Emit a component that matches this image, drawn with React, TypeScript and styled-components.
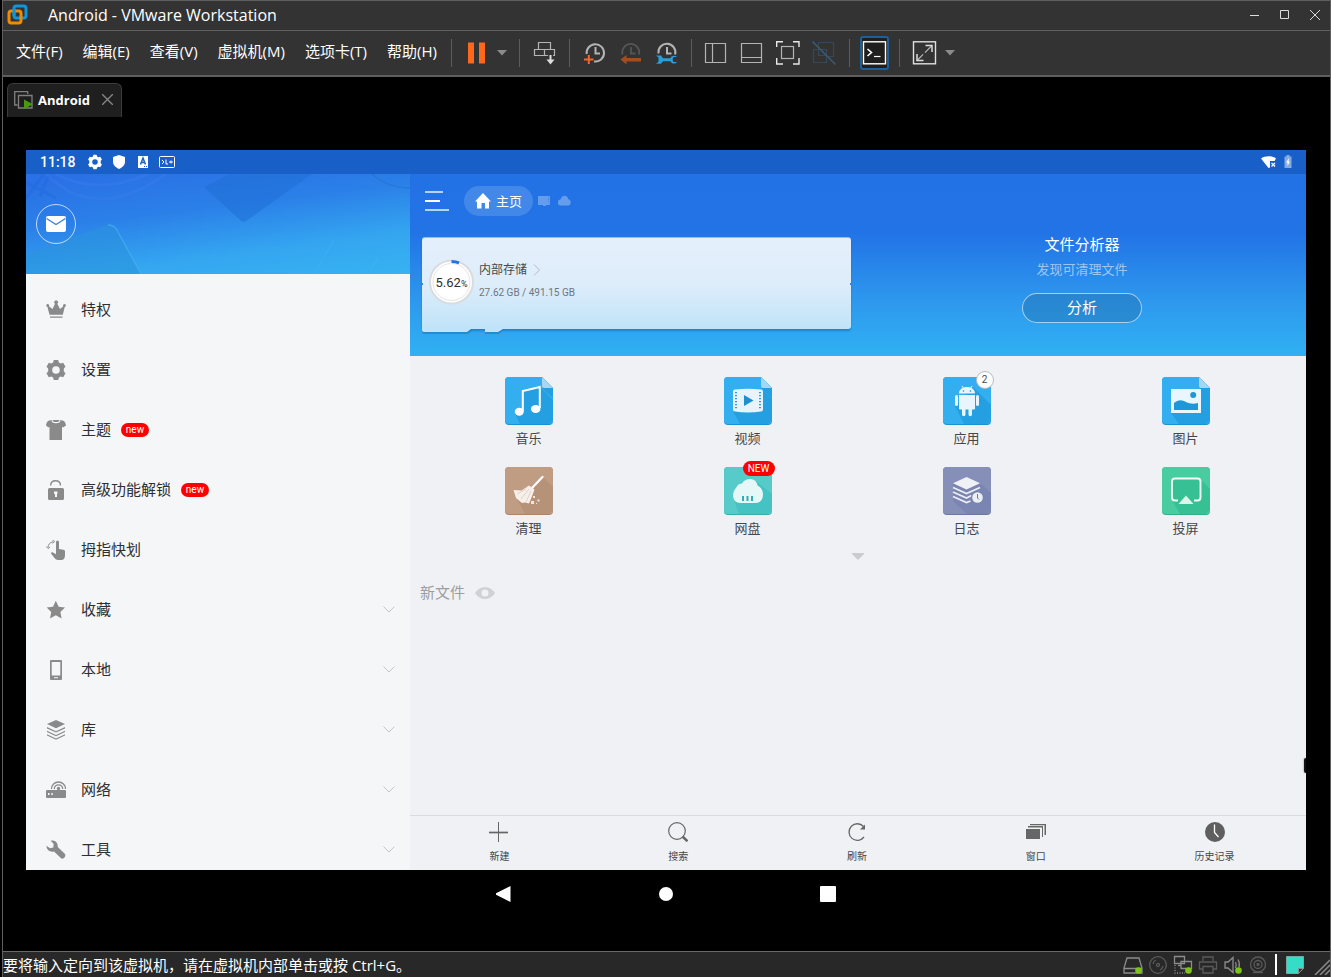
import React from 'react';
import styled, { createGlobalStyle } from 'styled-components';

const desktopFont = '"Open Sans", "Noto Sans CJK SC", sans-serif';
const deviceFont = 'Roboto, "Noto Sans CJK SC", sans-serif';

const GlobalStyle = createGlobalStyle`
  *, *::before, *::after { box-sizing: border-box; }
  body { margin: 0; background: #000; font-family: ${desktopFont}; }
  button { margin: 0; padding: 0; border: 0; background: none; color: inherit; font: inherit; cursor: pointer; }
  h1, h2, p { margin: 0; font-weight: 400; }
  svg { display: block; flex: none; }
`;

/* ---------- desktop window ---------- */

const Window = styled.div`
  display: flex;
  flex-direction: column;
  height: 100vh;
  min-height: 600px;
  border: solid #5f5f5f;
  border-width: 1px 1px 0 1px;
  margin-left: 2px;
  background: #000;
  color: #fff;
`;

const TitleBar = styled.header`
  display: flex;
  align-items: center;
  height: 30px;
  flex: none;
  padding: 0 5px 2px 4px;
  background: #333;
  border-bottom: 1px solid #5f5f5f;
`;

const WindowTitle = styled.h1`
  flex: 1;
  margin-left: 20px;
  font-size: 16px;
  line-height: 26px;
`;

const WindowButtons = styled.div`
  display: flex;
  gap: 10px;
`;

const WindowButton = styled.button`
  display: grid;
  place-items: center;
  width: 20px;
  height: 24px;
`;

const CommandBar = styled.div`
  display: flex;
  align-items: center;
  height: 46px;
  flex: none;
  padding-left: 13px;
  background: #333;
  border-bottom: 2px solid #5f5f5f;
`;

const MenuBar = styled.nav`
  display: flex;
  gap: 20px;
  margin-right: 2px;
`;

const MenuItem = styled.button`
  padding-bottom: 4px;
  font-size: 15px;
  line-height: 24px;
  white-space: nowrap;
`;

const Divider = styled.span`
  width: 1px;
  height: 28px;
  margin: 0 12px;
  background: #5c5c5c;
`;

const ToolGroup = styled.div<{ $gap?: number }>`
  display: flex;
  align-items: center;
  gap: ${(p) => p.$gap ?? 11}px;
`;

const ToolButton = styled.button`
  width: 25px;
  height: 24px;
`;

const CaretButton = styled.button`
  display: flex;
  justify-content: flex-end;
  width: 18px;
`;

const ConsoleButton = styled.button`
  display: grid;
  place-items: center;
  width: 29px;
  height: 34px;
  margin: 0 -2px;
  border: 2px solid #1b5f9c;
  border-radius: 3px;
  background: #1f1f1f;
`;

const Workspace = styled.main`
  display: flex;
  flex-direction: column;
  flex: 1;
  min-height: 0;
  padding: 6px 24px 33px 23px;
`;

const TabStrip = styled.div`
  display: flex;
  flex: none;
  margin: 0 0 33px -19px;
`;

const Tab = styled.div`
  display: flex;
  align-items: center;
  height: 34px;
  padding: 0 8px 2px 6px;
  border: 1px solid #3c3c3c;
  border-bottom: 0;
  border-radius: 6px 6px 0 0;
  background: #1f1f1f;
`;

const TabName = styled.button`
  display: flex;
  align-items: center;
  gap: 5px;
  margin-right: 12px;
  font-size: 13px;
  font-weight: 700;
`;

const StatusStrip = styled.footer`
  display: flex;
  align-items: center;
  justify-content: space-between;
  height: 26px;
  flex: none;
  border-top: 1px solid #6a6a6a;
  background: #282828;
`;

const StatusText = styled.p`
  font-size: 15px;
  line-height: 24px;
  white-space: nowrap;
`;

const DeviceIcons = styled.div`
  display: flex;
  align-items: center;
  gap: 5px;
`;

const WhiteBar = styled.span`
  width: 2px;
  height: 21px;
  margin: 0 3px 0 2px;
  background: #fff;
`;

/* ---------- guest screen ---------- */

const Screen = styled.section`
  position: relative;
  display: flex;
  flex-direction: column;
  flex: 1;
  min-height: 0;
  overflow: hidden;
  font-family: ${deviceFont};
`;

const DeviceStatus = styled.div`
  display: flex;
  align-items: center;
  justify-content: space-between;
  height: 24px;
  flex: none;
  padding: 0 14px;
  background: #185fc8;
  font-size: 14px;
  font-weight: 500;
`;

const StatusSide = styled.div<{ $gap: number }>`
  display: flex;
  align-items: center;
  gap: ${(p) => p.$gap}px;
`;

const Clock = styled.span`
  width: 39px;
`;

const Columns = styled.div`
  display: flex;
  flex: 1;
  min-height: 0;
`;

const Sidebar = styled.aside`
  width: 30%;
  flex: none;
  overflow: hidden;
  background: #f5f6f8;
  color: #2d2f33;
`;

const Hero = styled.div`
  display: grid;
  height: 100px;
  background: linear-gradient(173deg, #2a70e6 5%, #2b80e8 38%, #34a6f0 72%, #37b2f2 100%);
  & > * { grid-area: 1 / 1; }
`;

const HeroArt = styled.svg`
  width: 100%;
  height: 100px;
`;

const MailButton = styled.button`
  display: grid;
  place-items: center;
  width: 40px;
  height: 40px;
  margin: 30px 10px;
  border: 1px solid rgba(255, 255, 255, 0.7);
  border-radius: 50%;
`;

const SideList = styled.nav`
  padding-top: 6px;
`;

const SideItem = styled.button`
  display: flex;
  align-items: center;
  width: 100%;
  height: 60px;
  padding: 0 15px 0 20px;
  font-size: 15px;
  text-align: left;
`;

const SideLabel = styled.span`
  margin: 0 10px 0 15px;
  padding-bottom: 4px;
`;

const NewBadge = styled.span`
  width: 28px;
  height: 14px;
  border-radius: 7px;
  background: #f00;
  color: #fff;
  font-size: 10px;
  line-height: 14px;
  text-align: center;
`;

const Expand = styled.svg`
  margin: 0 0 2px auto;
`;

const Content = styled.div`
  display: flex;
  flex-direction: column;
  flex: 1;
  min-width: 0;
  background: #f0f1f4;
  color: #44474c;
`;

const Banner = styled.div`
  flex: none;
  height: 182px;
  padding-top: 12px;
  background: linear-gradient(#2272e6 0, #2273e6 32%, #2e9aee 72%, #30b1f3 100%);
  color: #fff;
`;

const PathBar = styled.div`
  display: flex;
  align-items: center;
  height: 30px;
  padding-left: 14px;
`;

const HomePill = styled.button`
  display: flex;
  align-items: center;
  gap: 5px;
  height: 30px;
  margin: 0 5px 0 15px;
  padding: 0 11px;
  border-radius: 15px;
  background: #4288e9;
  font-size: 13px;
`;

const HomeLabel = styled.span`
  padding-bottom: 2px;
`;

const PathIcons = styled.div`
  display: flex;
  gap: 7px;
  padding-bottom: 2px;
`;

const Summary = styled.div`
  display: grid;
  grid-template-columns: 1fr 1fr;
  align-items: start;
  padding-top: 21px;
`;

const StorageCard = styled.button`
  position: relative;
  display: flex;
  align-items: center;
  height: 92px;
  margin: 0 7px 0 12px;
  padding: 0 7px 3px;
  border-top: 1px solid #90bdf3;
  border-radius: 3px 3px 3px 0;
  background: linear-gradient(#e4effb, #deedfa 50%, #c0e3f9);
  box-shadow: 0 2px 2px rgba(20, 90, 150, 0.45);
  color: #45494f;
  text-align: left;
`;

const CardFeet = styled.svg`
  position: absolute;
  left: 0;
  top: 100%;
  margin-top: -1px;
`;

const CardNotch = styled.span<{ $side: 'left' | 'right' }>`
  position: absolute;
  ${(p) => p.$side}: 0;
  top: 45px;
  width: 1px;
  height: 2px;
  background: #2b84e9;
`;

const Gauge = styled.span`
  display: grid;
  place-items: center;
  & > * { grid-area: 1 / 1; }
`;

const GaugeValue = styled.span`
  font-size: 13px;
  color: #2d2f33;
  small { font-size: 9px; }
`;

const StorageText = styled.span`
  display: flex;
  flex-direction: column;
  gap: 6px;
  margin: 0 0 3px 5px;
`;

const StorageName = styled.span`
  display: flex;
  align-items: center;
  gap: 6px;
  font-size: 12px;
  line-height: 18px;
`;

const StorageSize = styled.span`
  font-size: 10px;
  line-height: 16px;
  color: #6d7680;
`;

const Analyzer = styled.div`
  display: flex;
  flex-direction: column;
  align-items: center;
`;

const AnalyzerTitle = styled.h2`
  font-size: 15px;
  line-height: 16px;
`;

const AnalyzerHint = styled.p`
  margin: 6px 0 12px;
  font-size: 13px;
  line-height: 22px;
  color: rgba(255, 255, 255, 0.55);
`;

const AnalyzeButton = styled.button`
  width: 120px;
  height: 30px;
  border: 1px solid rgba(255, 255, 255, 0.6);
  border-radius: 15px;
  background: rgba(32, 110, 170, 0.4);
  font-size: 15px;
  line-height: 26px;
`;

const TileGrid = styled.div`
  display: grid;
  grid-template-columns: repeat(4, 1fr);
  grid-auto-rows: 90px;
  padding: 21px 11px 0 9px;
`;

const Tile = styled.button`
  display: flex;
  flex-direction: column;
  align-items: center;
  gap: 4px;
  height: 72px;
  font-size: 13px;
  line-height: 20px;
`;

const TileArt = styled.span`
  position: relative;
`;

const CountBadge = styled.span`
  position: absolute;
  top: -6px;
  right: -3px;
  width: 18px;
  height: 18px;
  border: 1px solid #b9bcc0;
  border-radius: 50%;
  background: #fff;
  font-size: 10px;
  line-height: 16px;
  text-align: center;
`;

const RedBadge = styled.span`
  position: absolute;
  top: -6px;
  right: -3px;
  width: 32px;
  height: 15px;
  border-radius: 8px;
  background: #f00;
  color: #fff;
  font-size: 10px;
  line-height: 15px;
  text-align: center;
`;

const MoreButton = styled.button`
  display: flex;
  align-items: center;
  justify-content: center;
  height: 39px;
  margin-top: -20px;
`;

const NewFiles = styled.div`
  display: flex;
  align-items: flex-start;
  gap: 10px;
  flex: 1;
  padding: 6px 10px;
  color: #9b9ea3;
  h2 { font-size: 15px; line-height: 22px; }
  svg { margin-top: 5px; }
`;

const BottomBar = styled.nav`
  display: grid;
  grid-template-columns: repeat(5, 1fr);
  height: 55px;
  flex: none;
  padding-right: 2px;
  border-top: 1px solid #d9dbde;
`;

const BottomItem = styled.button`
  display: flex;
  flex-direction: column;
  align-items: center;
  gap: 7px;
  padding-top: 6px;
  font-size: 10px;
  line-height: 16px;
`;

const EdgeHandle = styled.span`
  position: absolute;
  right: 0;
  bottom: 97px;
  width: 2px;
  height: 15px;
  border-radius: 2px 0 0 2px;
  background: #111;
  box-shadow: 0 0 2px rgba(0, 0, 0, 0.5);
`;

const SystemNav = styled.nav`
  display: flex;
  justify-content: center;
  height: 48px;
  flex: none;
`;

const SystemButton = styled.button`
  display: grid;
  place-items: center;
  width: 162px;
`;

/* ---------- toolbar drawings ---------- */

const Tool = ({ children }: { children: React.ReactNode }) => (
  <svg width="25" height="24" viewBox="0 0 25 24" fill="none" stroke="#b4b4b4" strokeWidth="1.2">
    {children}
  </svg>
);

const Caret = () => (
  <svg width="10" height="6" viewBox="0 0 10 6"><path d="M0 0h10L5 5.5z" fill="#8b8b8b" /></svg>
);

const ProductLogo = () => (
  <svg width="21" height="21" viewBox="0 0 21 21" fill="none" strokeWidth="3">
    <rect x="7" y="2" width="12" height="12" rx="2.2" stroke="#0f95d8" />
    <rect x="2" y="7" width="12" height="12" rx="2.2" stroke="#f38b00" />
    <path d="M7 12V5" stroke="#0f95d8" />
  </svg>
);

const Pause = () => <Tool><path d="M4 1.500h6v21H4zM15 1.500h6v21h-6z" fill="#ff671b" stroke="none" /></Tool>;

const SendKeys = () => (
  <Tool>
    <path d="M6.500 1.500h12v7h-12zM2.500 8.500h10v6h-10zM12.500 8.500h10v6h-10z" />
    <path d="M18.500 13v9" stroke="#333" strokeWidth="5" />
    <path d="M18.500 14v6" stroke="#ddd" strokeWidth="2" />
    <path d="M14.500 18.500h8l-4 5z" fill="#ddd" stroke="none" />
  </Tool>
);

const SnapshotTake = () => (
  <Tool>
    <path d="M4.700 13A8.700 8.700 0 1 1 12 20.500M13.500 6v6.500H18" strokeWidth="2" />
    <path d="M6.800 14v9M2 18.500h9.500" stroke="#f0682a" strokeWidth="2" />
  </Tool>
);

const SnapshotRevert = () => (
  <Tool>
    <path d="M4.500 13.500a8.500 8.500 0 1 1 16.500 0M13 6v6.500h4.500" stroke="#555" strokeWidth="1.800" />
    <path d="M2.500 18.500l6-4.500v3h14.500v3.500H8.500v3z" fill="#a04e24" stroke="none" />
  </Tool>
);

const SnapshotManage = () => (
  <Tool>
    <path d="M4.500 12.500a8.500 8.500 0 1 1 16.600 1M13 6v6.500h4.500" strokeWidth="2" />
    <path d="M2 14.500h5l2 2.700h7.500c1-2.500 4.500-3.200 6.500-1.200h-3.500l-1 2.500 1 2.500H23c-2 2.500-5.500 1.800-6.500-.8H9L7 22.800H2l2.500-2v-4.300z" fill="#2e9bdc" stroke="none" />
  </Tool>
);

const SidePanel = () => <Tool><path d="M1.500 2.500h20v19h-20zM8.500 2.500v19" /></Tool>;
const BottomPanel = () => <Tool><path d="M1.500 2.500h20v19h-20zM1.500 16.500h20" /></Tool>;
const FitGuest = () => (
  <Tool>
    <path d="M.700 6V.7H7M17 .7h6V6M23 17v6h-6M7 23H.700v-6" stroke="#e8e8e8" strokeWidth="1.400" />
    <rect x="5.500" y="5.500" width="12" height="12" />
  </Tool>
);
const Unity = () => (
  <Tool>
    <g stroke="#34495d"><path d="M6.500 5V1.500h15v14H17M1.500 8.500h13v13h-13zM6.500 8.500v6h8" /></g>
    <path d="M.500.500L23.500 23.500" stroke="#3c5870" strokeWidth="1.600" />
  </Tool>
);
const ConsoleView = () => (
  <Tool>
    <rect x="1.500" y=".8" width="22" height="22" stroke="#fff" strokeWidth="1.400" />
    <path d="M5.500 8l4 3.500-4 3.500" stroke="#fff" strokeWidth="1.600" />
    <path d="M12 15.500h6.500" stroke="#fff" />
  </Tool>
);
const FullScreen = () => (
  <Tool>
    <rect x="1.500" y=".8" width="22" height="22" stroke="#e0e0e0" strokeWidth="1.400" />
    <path d="M5.500 19L19.500 5" strokeDasharray="8 2.500 12" />
    <path d="M13.500 4.500H20V11M5 13v6.500h6.500" stroke="#ddd" strokeWidth="1.500" />
  </Tool>
);

/* ---------- host status drawings ---------- */

const Host = ({ dim, live, children }: { dim?: boolean; live?: boolean; children: React.ReactNode }) => (
  <svg width="20" height="20" viewBox="0 0 20 20" fill="none" stroke={dim ? '#5a5a5a' : '#8c8c8c'} strokeWidth="1.300">
    {children}
    {live && <circle cx="15.500" cy="15.500" r="3.300" fill="#7cc21a" stroke="none" />}
  </svg>
);

/* ---------- sidebar drawings ---------- */

const sideIcons: Record<string, React.ReactNode> = {
  crown: <path d="M3.500 14.800L1.400 6.800a1.400 1.400 0 1 1 1.500-.6L6.500 9l2.500-5.200a1.900 1.900 0 1 1 2.300 0L14 9l3.300-2.800a1.400 1.400 0 1 1 1.500.6l-2 8zM4 16.500h12.500v1.300H4z" />,
  gear: <path fillRule="evenodd" d="M7.800 0h4.400l.7 2.500 1.800 1 2.500-.7 2.300 3.900-1.700 1.800v3l1.700 1.800-2.300 3.900-2.500-.7-1.800 1-.7 2.500H7.800l-.7-2.500-1.800-1-2.500.7-2.300-3.900 1.700-1.800v-3L.5 6.700l2.300-3.900 2.500.7 1.800-1zM10 6.200a3.800 3.800 0 1 0 0 7.600 3.800 3.800 0 0 0 0-7.600z" />,
  shirt: <path d="M5.500 0a4.500 3.300 0 0 0 9 0c3 .3 5 1.500 5.500 5.500L17 7.500l-1-.7V20H3.500V6.800l-1 .7-2.500-2C.5 1.500 2.500.3 5.500 0zM6.500 0h7a3.500 2 0 0 1-7 0z" fillRule="evenodd" />,
  lock: (
    <>
      <path d="M4.700 5.500C4.700 2.500 6.500.7 9.500.7s5 1.800 5 4.800" fill="none" stroke="#8a8a8a" strokeWidth="1.400" />
      <path fillRule="evenodd" d="M3.500 8h13A1.500 1.500 0 0 1 18 9.500v9a1.500 1.500 0 0 1-1.500 1.500h-13A1.500 1.500 0 0 1 2 18.500v-9A1.500 1.500 0 0 1 3.500 8zM8 11.500V14h1v3h2v-3l.5-.5v-2z" />
    </>
  ),
  swipe: (
    <>
      <path d="M10 2a1.500 1.500 0 0 1 3 0v7l4.500.8c1.200.3 1.500 1 1.500 2v3.500c0 3-1.500 4.700-3.500 4.700h-3.500c-1.500 0-2.500-.7-3.500-2L5 13.500c0-1 1-1.500 2-1l3 1.800z" />
      <path d="M7 1.700C4 2.500 2 4.500 2 7.500M6.500 0l2.200 1.500-2.200 1.700M.3 6.500L2 8.500l2-1.500" fill="none" stroke="#8a8a8a" />
    </>
  ),
  star: <path d="M9.800.8l2.900 6 6.300.8-4.600 4.400 1.200 6.400-5.800-3.100L4 18.400 5.200 12 .7 7.600 7 6.800z" />,
  phone: <path fillRule="evenodd" d="M5 0h10a1 1 0 0 1 1 1v18a1 1 0 0 1-1 1H5a1 1 0 0 1-1-1V1a1 1 0 0 1 1-1zM5.700 2v13.500h8.600V2zM8 17.200v1h4v-1z" />,
  layers: <path d="M10 0l9 4-9 4.300L1 4zM1 7l9 4.200L19 7v1.400l-9 4.200L1 8.400zM1 10.700l9 4.200 9-4.200v1.400l-9 4.200-9-4.200zM1 14.200l9 4.200 9-4.200v1.400l-9 4.200-9-4.200z" />,
  router: (
    <>
      <path fillRule="evenodd" d="M1 10h18a1 1 0 0 1 1 1v6a1 1 0 0 1-1 1H1a1 1 0 0 1-1-1v-6a1 1 0 0 1 1-1zM2 13v2h1.500v-2zM5.300 13v2h1.500v-2z" />
      <circle cx="12.500" cy="8.500" r="1.700" />
      <path d="M5.500 9a7 7 0 0 1 14 0M8.300 9a4.200 4.200 0 0 1 8.400 0" fill="none" stroke="#8a8a8a" strokeWidth="1.300" />
    </>
  ),
  wrench: <path d="M4.800.8C8 0 12 1.800 11.800 7l7 6.800c.8 1 .7 2 0 3.300-1 1.600-2.800 2-4 1L8 11.500c-3.500 1-7.500-1-7.500-5.700L4 8.300 7.300 7.500 7.700 4z" />,
};

const sideItems = [
  { label: '特权', icon: 'crown' },
  { label: '设置', icon: 'gear' },
  { label: '主题', icon: 'shirt', fresh: true },
  { label: '高级功能解锁', icon: 'lock', fresh: true },
  { label: '拇指快划', icon: 'swipe' },
  { label: '收藏', icon: 'star', opens: true },
  { label: '本地', icon: 'phone', opens: true },
  { label: '库', icon: 'layers', opens: true },
  { label: '网络', icon: 'router', opens: true },
  { label: '工具', icon: 'wrench', opens: true },
];

/* ---------- tile drawings ---------- */

type TileProps = { color: string; edge: string; shade: string; shadow: string; fold?: boolean; children: React.ReactNode };

const TileIcon = ({ color, edge, shade, shadow, fold, children }: TileProps) => {
  const outline = fold
    ? 'M4 0H37L48 11V44a4 4 0 0 1-4 4H4a4 4 0 0 1-4-4V4a4 4 0 0 1 4-4z'
    : 'M4 0H44a4 4 0 0 1 4 4V44a4 4 0 0 1-4 4H4a4 4 0 0 1-4-4V4a4 4 0 0 1 4-4z';
  const inner = fold
    ? 'M4 0H37L48 11V43a4 4 0 0 1-4 4H4a4 4 0 0 1-4-4V4a4 4 0 0 1 4-4z'
    : 'M4 0H44a4 4 0 0 1 4 4V43a4 4 0 0 1-4 4H4a4 4 0 0 1-4-4V4a4 4 0 0 1 4-4z';
  return (
    <svg width="48" height="48" viewBox="0 0 48 48">
      <path d={outline} fill={edge} />
      <path d={inner} fill={color} />
      <path d={shadow} fill={shade} opacity=".6" />
      {fold && <path d="M37 11l11 10V11z" fill={shade} opacity=".6" />}
      {fold && <path d="M37 0l11 11H39a2 2 0 0 1-2-2z" fill="#a5d6f3" />}
      {children}
    </svg>
  );
};

const blue = { color: '#33aff0', edge: '#1a93d6', shade: '#1995d8' };

const tiles = [
  {
    label: '音乐',
    art: (
      <TileIcon {...blue} fold shadow="M17 14l18-4 13 13v20l-4 4H15L10 37l7-5z">
        <path d="M17.800 34V14l17-4v21" fill="none" stroke="#fff" strokeWidth="2" />
        <ellipse cx="14.300" cy="34.700" rx="4.500" ry="4" fill="#fff" />
        <ellipse cx="30.700" cy="32" rx="4.800" ry="4" fill="#fff" />
      </TileIcon>
    ),
  },
  {
    label: '视频',
    art: (
      <TileIcon {...blue} fold shadow="M39 13l9 9v21l-4 4H16L9 34z">
        <path d="M11 12.500q13-1.500 26 0 2 0 2 2v18q0 2-2 2-13 2-26 0-2 0-2-2v-18q0-2 2-2z" fill="#e7f4fc" />
        <path d="M20 18l9.500 5.500L20 29z" fill="#1d8fd2" />
        <path d="M12 15v18M36 15v18" stroke="#1d8fd2" strokeWidth="1.800" strokeDasharray="1.200 1.800" />
      </TileIcon>
    ),
  },
  {
    label: '应用',
    badge: <CountBadge>2</CountBadge>,
    art: (
      <TileIcon {...blue} shadow="M30 10l18 18v15l-4 4H21L12 29l4-4z">
        <g fill="#e9f5fd">
          <path d="M16 16.500c0-4 3.500-6.500 8-6.500s8 2.500 8 6.500zM16 18h16v13.500a1 1 0 0 1-1 1H17a1 1 0 0 1-1-1zM19 32h3.500v5.500a1.700 1.700 0 0 1-3.500 0zM25.500 32H29v5.500a1.700 1.700 0 0 1-3.500 0z" />
          <rect x="12" y="18" width="3" height="11" rx="1.500" />
          <rect x="33" y="18" width="3" height="11" rx="1.500" />
        </g>
        <path d="M19 9l2 3M29 9l-2 3" stroke="#e9f5fd" />
        <circle cx="20.500" cy="14" r=".8" fill="#1d8fd2" /><circle cx="27.500" cy="14" r=".8" fill="#1d8fd2" />
      </TileIcon>
    ),
  },
  {
    label: '图片',
    art: (
      <TileIcon {...blue} fold shadow="M39 12l9 9v22l-4 4H17L9 36z">
        <path d="M9 12h30v24H9z" fill="#eaf6fd" />
        <path d="M12 33v-7c5-4 8-3 12-1 4 2 8 2 12 1v7z" fill="#1d96da" />
        <circle cx="31.200" cy="18" r="3" fill="#1d96da" />
      </TileIcon>
    ),
  },
  {
    label: '清理',
    art: (
      <TileIcon color="#bf9c82" edge="#ad8468" shade="#b08c73" shadow="M38 10l10 10v23l-4 4H20L9 26l18-5z">
        <path d="M37.500 10L27 21" stroke="#fff" strokeWidth="2.300" strokeLinecap="round" />
        <path d="M24 18.500l5.500 4-2 5.500-3.500 8.500-4-1-3 .5L11 31 8.500 23l8 .5z" fill="#f7efe9" />
        <path d="M24 22l-8 10M26 24l-5 11M21 22l-9 5" stroke="#d8c4b5" strokeWidth=".7" />
        <path d="M28 29h2v2h-2zM26 34h3v3h-3zM32.500 32.500h2v2h-2zM31 36h1v1h-1z" fill="#f0e4db" />
      </TileIcon>
    ),
  },
  {
    label: '网盘',
    badge: <RedBadge>NEW</RedBadge>,
    art: (
      <TileIcon color="#56cbca" edge="#37b0b0" shade="#3bbcbc" shadow="M32 14l16 13v16l-4 4H15L9 30z">
        <path d="M16.500 36C12 36 9 33 9 28.500c0-4 2-6.500 4-9 1-2.500 3-2.800 5-3C20 13 23 12 26 12c4 0 7 2.500 7.500 6.500 3.500 1.500 5.500 5 5.500 9 0 5-3 8.500-7.500 8.500z" fill="#e5f7f6" />
        <path d="M18 29h2v5h-2zM22.500 29h2v5h-2zM27 29h2v5h-2z" fill="#2fb0b0" />
      </TileIcon>
    ),
  },
  {
    label: '日志',
    art: (
      <TileIcon color="#868fb8" edge="#6d77a5" shade="#757fac" shadow="M37 16l11 10v17l-4 4H24L10 34V16z">
        <path d="M23.500 10L37 16.200 23.500 22.500 10 16.200z" fill="#f0f1f7" />
        <path d="M10 20.500l13.500 6 13.500-6M10 25l13.500 6 5-2.500M10 29.500l13.500 6 4-1.500" fill="none" stroke="#eceef6" strokeWidth="1.800" />
        <circle cx="34.500" cy="30.500" r="6.500" fill="#7a84b0" />
        <circle cx="34.500" cy="30.500" r="5.300" fill="#eceef6" />
        <path d="M34.500 27v4l1.500 1.500" fill="none" stroke="#6d77a5" />
      </TileIcon>
    ),
  },
  {
    label: '投屏',
    art: (
      <TileIcon color="#49cda0" edge="#2db387" shade="#2cb88a" shadow="M38 12l10 10v21l-4 4H18L10 33V12z">
        <path d="M16 33.500h-3a3 3 0 0 1-3-3v-16a3 3 0 0 1 3-3h22.500a3 3 0 0 1 3 3v16a3 3 0 0 1-3 3H32" fill="none" stroke="#f0fbf7" strokeWidth="1.900" />
        <path d="M24 28.500l7.500 8.500h-15z" fill="#dff5ec" />
      </TileIcon>
    ),
  },
];

const bottomItems = [
  { label: '新建', art: <><path d="M9.500 0v20" stroke="#666" /><path d="M0 10.500h19" stroke="#666" strokeWidth="1.700" /></> },
  {
    label: '搜索',
    art: (
      <>
        <circle cx="9" cy="9" r="8.300" fill="none" stroke="#666" strokeWidth="1.200" />
        <path d="M14.500 14.500l5 4.800" stroke="#666" strokeWidth="2.500" />
      </>
    ),
  },
  {
    label: '刷新',
    art: (
      <>
        <path d="M16.500 4.500A8.300 8.300 0 1 0 17 15" fill="none" stroke="#666" strokeWidth="1.300" />
        <path d="M18 2.500v5h-5z" fill="#666" />
      </>
    ),
  },
  {
    label: '窗口',
    art: <path d="M0 7h14v10H0zM2 4h15v11h-1V5.500H2zM4 2h16v11h-1.500V3.200H4z" fill="#666" />,
  },
  {
    label: '历史记录',
    art: <><circle cx="10" cy="10" r="10" fill="#5f5f5f" /><path d="M9.500 2.500v8l4 4.500" fill="none" stroke="#fff" strokeWidth="1.300" /></>,
  },
];

const Toolbar = () => (
  <>
    <Divider />
    <ToolGroup $gap={0}>
      <ToolButton aria-label="暂停"><Pause /></ToolButton>
      <CaretButton aria-label="电源选项"><Caret /></CaretButton>
    </ToolGroup>
    <Divider />
    <ToolButton aria-label="发送按键"><SendKeys /></ToolButton>
    <Divider />
    <ToolGroup>
      <ToolButton aria-label="拍摄快照"><SnapshotTake /></ToolButton>
      <ToolButton aria-label="恢复快照"><SnapshotRevert /></ToolButton>
      <ToolButton aria-label="管理快照"><SnapshotManage /></ToolButton>
    </ToolGroup>
    <Divider />
    <ToolGroup>
      <ToolButton aria-label="显示库"><SidePanel /></ToolButton>
      <ToolButton aria-label="显示缩略图"><BottomPanel /></ToolButton>
      <ToolButton aria-label="适应客户机"><FitGuest /></ToolButton>
      <ToolButton aria-label="Unity"><Unity /></ToolButton>
    </ToolGroup>
    <Divider />
    <ConsoleButton aria-label="控制台视图"><ConsoleView /></ConsoleButton>
    <Divider />
    <ToolGroup $gap={0}>
      <ToolButton aria-label="全屏"><FullScreen /></ToolButton>
      <CaretButton aria-label="全屏选项"><Caret /></CaretButton>
    </ToolGroup>
  </>
);

const HostDevices = () => (
  <DeviceIcons>
    <Host live><path d="M4 3h12l3 10v5H1v-5zM1 13.500h18" /></Host>
    <Host dim><circle cx="10" cy="10" r="8.300" /><circle cx="10" cy="10" r="1.500" /><path d="M5 9a5 5 0 0 1 3-4M15 11a5 5 0 0 1-3 4" /></Host>
    <Host live>
      <path d="M1.500 1.500h10v7h-10zM8 6.500h10.500v7H8z" fill="#282828" />
      <path d="M2 10v8h10" strokeDasharray="1 1.500" />
      <path d="M5 10.500h3" />
    </Host>
    <Host dim><path d="M5 6V2h10v4M5 14H1.500V7h17v7H15M5 11.500h10V18H5z" /></Host>
    <Host live><path d="M2 7h3l5-4.500v15L5 13H2zM12.500 7c1 2 1 4 0 6M15 4.500c1.500 2.500 1.800 5 1 8" /></Host>
    <Host dim><circle cx="10" cy="9.500" r="7.500" /><circle cx="10" cy="9.500" r="4" /><circle cx="10" cy="9.500" r="1" /><path d="M5 17.500h10" /></Host>
    <WhiteBar />
    <svg width="20" height="20" viewBox="0 0 20 20"><path d="M1.500 1.500h17v12l-5 5h-12z" fill="#35dcc8" stroke="#75a9a2" /><path d="M13.500 18.500v-5h5z" fill="#333" stroke="#8c8c8c" /></svg>
    <svg width="20" height="20" viewBox="0 0 20 20" stroke="#8c8c8c" strokeWidth="1.500"><path d="M5 20L20 5M10 20L20 10M15 20l5-5" /></svg>
  </DeviceIcons>
);

const SidebarPanel = () => (
  <Sidebar>
    <Hero>
      <HeroArt viewBox="0 0 384 100" preserveAspectRatio="none" fill="none">
        <path d="M178 13l26-13h82l-66 47q-3 2-6-1z" fill="#1f6fd6" opacity=".55" />
        <path d="M0 81l80-30q7-2 11 5l24 44H0z" fill="#2a93dc" opacity=".55" />
        <path d="M82 51q6 0 9 5l24 44" stroke="#4ab0f4" strokeWidth="1.500" opacity=".6" />
        <path d="M346 0q16 14 38 14" stroke="#2175d0" strokeWidth="1.500" opacity=".6" />
        <path d="M30 0q40 22 92 0M20 0q50 50 120 0" stroke="#3b82ee" strokeWidth="3" opacity=".35" />
        <path d="M0 24L18 0M14 22l8-20M0 8l30 16" stroke="#1f62d8" strokeWidth="3" opacity=".3" />
        <path d="M288 100l20-34M344 96l8-12" stroke="#46bdf5" opacity=".4" />
      </HeroArt>
      <MailButton aria-label="消息">
        <svg width="20" height="16" viewBox="0 0 20 16"><rect width="20" height="16" rx="2" fill="#fff" /><path d="M.500 2.500l9.500 6 9.500-6" fill="none" stroke="#2d80e8" strokeWidth="1.300" /></svg>
      </MailButton>
    </Hero>
    <SideList>
      {sideItems.map((item) => (
        <SideItem key={item.label}>
          <svg width="20" height="20" viewBox="0 0 20 20" fill="#8a8a8a">{sideIcons[item.icon]}</svg>
          <SideLabel>{item.label}</SideLabel>
          {item.fresh && <NewBadge>new</NewBadge>}
          {item.opens && (
            <Expand width="12" height="7" viewBox="0 0 12 7" fill="none" stroke="#c3c7cc"><path d="M.500.500L6 6 11.500.500" /></Expand>
          )}
        </SideItem>
      ))}
    </SideList>
  </Sidebar>
);

const TopBanner = () => (
  <Banner>
    <PathBar>
      <svg width="25" height="20" viewBox="0 0 25 20" stroke="#b5d2f8" strokeWidth="2"><path d="M1 1h18M1 19h24" /><path d="M1 10h15" stroke="#fff" /></svg>
      <HomePill>
        <svg width="16" height="16" viewBox="0 0 16 16" fill="#fff"><path d="M8 0l8 8.500h-2V15.500h-4V10H6.500v5.500H2v-7H0z" /></svg>
        <HomeLabel>主页</HomeLabel>
      </HomePill>
      <PathIcons>
        <svg width="13" height="11" viewBox="0 0 13 11"><path d="M0 1h12v9H8v1H5v-1H0z" fill="#659ded" /><path d="M10.500 2v6" stroke="#3b7fe6" strokeDasharray="1 1" /></svg>
        <svg width="13" height="11" viewBox="0 0 13 11"><path d="M3 10.500a3 3 0 0 1-.500-6C3 2 5 .500 7 .800S10 2.500 10 4c2 .500 3 2 2.700 4S11 10.500 10 10.500z" fill="#659ded" /></svg>
      </PathIcons>
    </PathBar>
    <Summary>
      <StorageCard>
        <CardNotch $side="left" />
        <CardNotch $side="right" />
        <Gauge>
          <svg width="45" height="46" viewBox="0 0 45 46">
            <circle cx="22.500" cy="23" r="21.500" fill="#fff" stroke="#d9dbde" strokeWidth="2" />
            <circle cx="22.500" cy="23" r="18.500" fill="none" stroke="#e4e5e8" />
            <path d="M22.500 2.500a21 21 0 0 1 7.500 1.400" fill="none" stroke="#2272e6" strokeWidth="3" />
          </svg>
          <GaugeValue>5.62<small>%</small></GaugeValue>
        </Gauge>
        <StorageText>
          <StorageName>
            内部存储
            <svg width="8" height="12" viewBox="0 0 8 12" fill="none" stroke="#b3bac2"><path d="M1 .500L6.500 6 1 11.500" /></svg>
          </StorageName>
          <StorageSize>27.62 GB / 491.15 GB</StorageSize>
        </StorageText>
        <CardFeet width="84" height="6" viewBox="0 0 84 6">
          <path d="M0 1v3q0 2 3 2h43l5-4V1zM63 1v5h14l5-4V1z" fill="#1b83c4" opacity=".7" />
          <path d="M0 0v2q0 2 3 2h42l4-3V0zM63 0v4h13l5-3V0z" fill="#c0e3f9" />
        </CardFeet>
      </StorageCard>
      <Analyzer>
        <AnalyzerTitle>文件分析器</AnalyzerTitle>
        <AnalyzerHint>发现可清理文件</AnalyzerHint>
        <AnalyzeButton>分析</AnalyzeButton>
      </Analyzer>
    </Summary>
  </Banner>
);

export default function App() {
  return (
    <>
      <GlobalStyle />
      <Window>
        <TitleBar>
          <ProductLogo />
          <WindowTitle>Android - VMware Workstation</WindowTitle>
          <WindowButtons>
            <WindowButton aria-label="最小化"><svg width="10" height="10" viewBox="0 0 10 10" stroke="#ddd"><path d="M0 5.500h9" /></svg></WindowButton>
            <WindowButton aria-label="最大化"><svg width="10" height="10" viewBox="0 0 10 10" stroke="#ddd" fill="none"><path d="M.500.500h8v8h-8z" /></svg></WindowButton>
            <WindowButton aria-label="关闭"><svg width="10" height="10" viewBox="0 0 10 10" stroke="#ddd"><path d="M0 0l10 10M10 0L0 10" /></svg></WindowButton>
          </WindowButtons>
        </TitleBar>
        <CommandBar>
          <MenuBar>
            {['文件(F)', '编辑(E)', '查看(V)', '虚拟机(M)', '选项卡(T)', '帮助(H)'].map((name) => (
              <MenuItem key={name}>{name}</MenuItem>
            ))}
          </MenuBar>
          <Toolbar />
        </CommandBar>

        <Workspace>
          <TabStrip>
            <Tab>
              <TabName>
                <svg width="19" height="18" viewBox="0 0 19 18" fill="none" stroke="#808080" strokeWidth="1.300">
                  <path d="M3.500 14H.700V.700h13V3M4.500 4.500H18V17H4.500z" />
                  <path d="M10 8.500l9 4.700-9 4.800z" fill="#4a9a10" stroke="none" />
                </svg>
                Android
              </TabName>
              <button aria-label="关闭标签页">
                <svg width="11" height="11" viewBox="0 0 11 11" stroke="#858585" strokeWidth="1.400"><path d="M0 0l11 11M11 0L0 11" /></svg>
              </button>
            </Tab>
          </TabStrip>

          <Screen>
            <DeviceStatus>
              <StatusSide $gap={8}>
                <Clock>11:18</Clock>
                <svg width="16" height="16" viewBox="-1 -1 22 22" fill="#fff">{sideIcons.gear}</svg>
                <svg width="16" height="16" viewBox="0 0 16 16" fill="#fff"><path d="M8 1l6 2v4.500c0 4-3 6-6 7.500-3-1.500-6-3.500-6-7.500V3z" /></svg>
                <svg width="16" height="16" viewBox="0 0 16 16"><path d="M3 2h10v12H3z" fill="#fff" /><path d="M5.500 10.500L8 4l2.500 6.500M6.300 8.500h3.400" fill="none" stroke="#185fc8" strokeWidth="1.500" /><path d="M9 12.500h3" stroke="#185fc8" strokeDasharray="1 1" /></svg>
                <svg width="16" height="16" viewBox="0 0 16 16" fill="none" stroke="#fff"><rect x=".5" y="2.500" width="15" height="11" rx="1" /><path d="M3 6l2 2-2 2M7 5.500V10h2M10 8h4M12 6.500v3" /></svg>
              </StatusSide>
              <StatusSide $gap={7}>
                <svg width="16" height="14" viewBox="0 0 16 14" fill="#fff"><path d="M0 3.500C4 .500 11 .500 15 3.500L13.500 6H9v6.500l-1.500.500z" /><path d="M10.500 8l3.500 3.500M14 8l-3.500 3.500" stroke="#fff" strokeWidth="1.300" /></svg>
                <svg width="8" height="14" viewBox="0 0 8 14"><path d="M.500 1.500h2V0h3v1.500h2V13h-7z" fill="#84abe2" /><path d="M5 3L2 7.500h1.500V11L6 6.500H4.500z" fill="#fff" /></svg>
              </StatusSide>
            </DeviceStatus>
            <Columns>
              <SidebarPanel />
              <Content>
                <TopBanner />
                <TileGrid>
                  {tiles.map((tile) => (
                    <Tile key={tile.label}>
                      <TileArt>{tile.art}{tile.badge}</TileArt>
                      {tile.label}
                    </Tile>
                  ))}
                </TileGrid>
                <MoreButton aria-label="展开更多">
                  <svg width="12" height="7" viewBox="0 0 12 7"><path d="M0 0h12v1L6 7 0 1z" fill="#c9cbce" /></svg>
                </MoreButton>
                <NewFiles>
                  <h2>新文件</h2>
                  <svg width="20" height="12" viewBox="0 0 20 12"><path fillRule="evenodd" d="M0 6C5-2 15-2 20 6 15 14 5 14 0 6zM10 2.500a3.500 3.500 0 1 0 0 7 3.500 3.500 0 0 0 0-7z" fill="#cfd1d4" /></svg>
                </NewFiles>
                <BottomBar>
                  {bottomItems.map((item) => (
                    <BottomItem key={item.label}>
                      <svg width="20" height="20" viewBox="0 0 20 20">{item.art}</svg>
                      {item.label}
                    </BottomItem>
                  ))}
                </BottomBar>
              </Content>
            </Columns>
            <EdgeHandle />
          </Screen>

          <SystemNav>
            <SystemButton aria-label="返回"><svg width="16" height="16" viewBox="0 0 16 16" fill="#fff"><path d="M14.500 0v16L0 8.700V7.300z" /></svg></SystemButton>
            <SystemButton aria-label="主屏幕"><svg width="16" height="16" viewBox="0 0 16 16" fill="#fff"><circle cx="8" cy="8" r="7" /></svg></SystemButton>
            <SystemButton aria-label="最近任务"><svg width="16" height="16" viewBox="0 0 16 16" fill="#fff"><rect width="16" height="16" rx="1" /></svg></SystemButton>
          </SystemNav>
        </Workspace>

        <StatusStrip>
          <StatusText>要将输入定向到该虚拟机，请在虚拟机内部单击或按 Ctrl+G。</StatusText>
          <HostDevices />
        </StatusStrip>
      </Window>
    </>
  );
}
